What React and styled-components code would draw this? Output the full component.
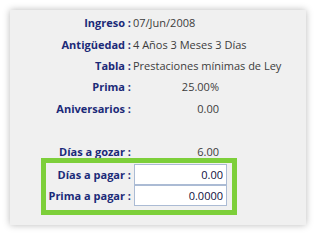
import React from 'react';
import styled, { createGlobalStyle } from 'styled-components';

const GlobalStyle = createGlobalStyle`
    html, body {
        margin: 0;
        padding: 0;
        background: #ffffff;
    }
    body {
        font-family: "Open Sans", "Liberation Sans", sans-serif;
        font-size: 11px;
    }
`;

const Page = styled.div`
    width: 315px;
    height: 235px;
    padding: 10px 9px 10px 10px;
    box-sizing: border-box;
`;

const Panel = styled.div`
    width: 296px;
    height: 215px;
    box-sizing: border-box;
    background: #f0f0f0;
    box-shadow: 0 0 7px rgba(0, 0, 0, 0.28);
    padding-top: 2px;
    display: flex;
    flex-direction: column;
`;

const Row = styled.div`
    display: grid;
    grid-template-columns: ${p => p.labelWidth || 121}px auto;
    column-gap: 2px;
    align-items: center;
    height: ${p => p.h || 21.4}px;
`;

const Label = styled.span`
    text-align: right;
    font-weight: 700;
    color: #1b2a78;
    white-space: nowrap;
`;

const Value = styled.span`
    color: #3c3c3c;
    white-space: nowrap;
    width: ${p => (p.right ? '86px' : 'auto')};
    text-align: ${p => (p.right ? 'right' : 'left')};
`;

const Spacer = styled.div`
    height: 21.4px;
`;

const Highlight = styled.div`
    margin-left: 31px;
    margin-top: -4px;
    width: 196px;
    box-sizing: border-box;
    border: 5px solid #7dcf3a;
    padding: 1px 4px 4px 0;
    display: flex;
    flex-direction: column;
`;

const Field = styled.input`
    width: 93px;
    height: 21px;
    box-sizing: border-box;
    margin-left: 1px;
    border: 1px solid #abbbd4;
    background: #ffffff;
    font-family: inherit;
    font-size: 11px;
    color: #101040;
    text-align: right;
    padding: 0 3px 0 2px;
    outline: none;
`;

const rows = [
    { label: 'Ingreso :', value: '07/Jun/2008' },
    { label: 'Antigüedad :', value: '4 Años 3 Meses 3 Días' },
    { label: 'Tabla :', value: 'Prestaciones mínimas de Ley' },
    { label: 'Prima :', value: '25.00%', right: true },
    { label: 'Aniversarios :', value: '0.00', right: true },
];

function App() {
    return (
        <>
            <GlobalStyle />
            <Page>
                <Panel>
                    {rows.map(r => (
                        <Row key={r.label}>
                            <Label>{r.label}</Label>
                            <Value right={r.right}>{r.value}</Value>
                        </Row>
                    ))}
                    <Spacer />
                    <Row>
                        <Label>Días a gozar :</Label>
                        <Value right>6.00</Value>
                    </Row>
                    <Highlight>
                        <Row labelWidth={85} h={21}>
                            <Label>Días a pagar :</Label>
                            <Field defaultValue="0.00" />
                        </Row>
                        <Row labelWidth={85} h={21}>
                            <Label>Prima a pagar :</Label>
                            <Field defaultValue="0.0000" />
                        </Row>
                    </Highlight>
                </Panel>
            </Page>
        </>
    );
}

export default App;
